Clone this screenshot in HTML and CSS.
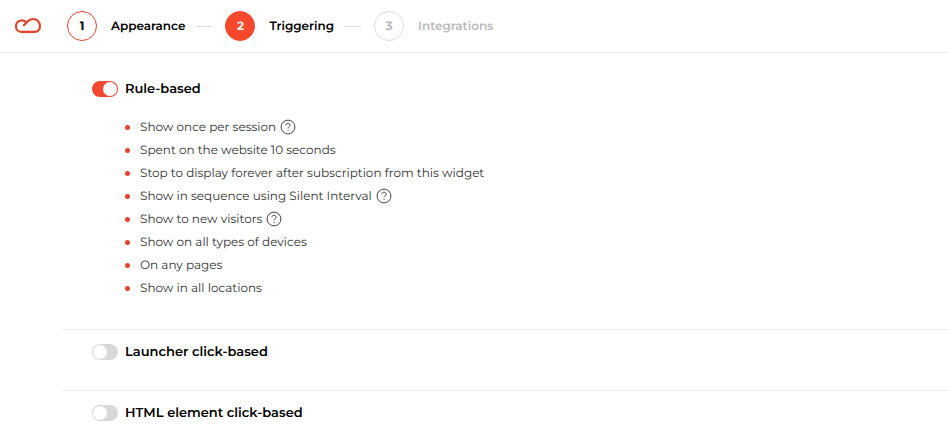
FILE: index.html
```html
<!DOCTYPE html>
<html lang="en">
<head>
<meta charset="utf-8">
<meta name="viewport" content="width=device-width, initial-scale=1">
<title>Triggering</title>
<link rel="stylesheet" href="styles.css">
</head>
<body>
<svg class="sprite" aria-hidden="true">
  <symbol id="help" viewBox="0 0 16 16">
    <circle cx="8" cy="8" r="6.9"/>
    <path d="M5.9 6.3C5.9 5 6.8 4.2 8 4.2s2.1.8 2.1 1.9c0 1.500-2 1.600-2 3.300"/>
    <path d="M8.1 11v1"/>
  </symbol>
</svg>
<header class="topbar">
  <a class="logo" href="#" aria-label="Home">
    <svg viewBox="0 0 28 18"><path d="M9.800 8.200 L12.300 5.700 C11 3.600 8.900 3.200 7.100 3.500 C4.500 3.900 2 6 2 9.500 C2 12.700 4.200 14.800 7.100 14.800 H20.600 C23.900 14.800 26 12.500 26 9.300 C26 4.700 22.700 2 19.300 2 C17.300 2 15.800 2.600 14.500 3.800 L9.800 8.200"/></svg>
  </a>
  <nav class="steps" aria-label="Steps">
    <a class="step done" href="#"><span class="number">1</span><span class="name">Appearance</span></a>
    <span class="dash"></span>
    <a class="step current" href="#" aria-current="step"><span class="number">2</span><span class="name">Triggering</span></a>
    <span class="dash"></span>
    <a class="step upcoming" href="#"><span class="number">3</span><span class="name">Integrations</span></a>
  </nav>
</header>
<main class="content">
  <section class="trigger">
    <label class="heading"><input class="switch" type="checkbox" role="switch" checked>Rule-based</label>
    <ul class="rules">
      <li>Show once per session <button class="help" type="button" aria-label="Help"><svg><use href="#help"/></svg></button></li>
      <li>Spent on the website 10 seconds</li>
      <li>Stop to display forever after subscription from this widget</li>
      <li>Show in sequence using Silent Interval <button class="help" type="button" aria-label="Help"><svg><use href="#help"/></svg></button></li>
      <li>Show to new visitors <button class="help" type="button" aria-label="Help"><svg><use href="#help"/></svg></button></li>
      <li>Show on all types of devices</li>
      <li>On any pages</li>
      <li>Show in all locations</li>
    </ul>
  </section>
  <section class="trigger">
    <label class="heading"><input class="switch" type="checkbox" role="switch">Launcher click-based</label>
  </section>
  <section class="trigger">
    <label class="heading"><input class="switch" type="checkbox" role="switch">HTML element click-based</label>
  </section>
</main>
</body>
</html>
```
FILE: styles.css
```css
* { box-sizing: border-box; }
body {
  margin: 0;
  background: #fff;
  color: #000;
  font-family: Montserrat, Inter, sans-serif;
  font-size: 12px;
  text-rendering: geometricPrecision;
}
.sprite { display: none; }
.topbar {
  display: flex;
  align-items: center;
  gap: 25px;
  height: 53px;
  padding-left: 14px;
  border-bottom: 1px solid #ececec;
}
.logo svg {
  display: block;
  width: 28px;
  height: 18px;
  fill: none;
  stroke: #e5432b;
  stroke-width: 2.2;
  stroke-linejoin: round;
  stroke-linecap: round;
}
.steps { display: flex; align-items: center; }
.step {
  display: flex;
  align-items: center;
  gap: 14px;
  color: inherit;
  font-size: 12px;
  font-weight: 600;
  text-decoration: none;
}
.number {
  display: grid;
  place-items: center;
  width: 30px;
  height: 30px;
  border: 1px solid #e5452e;
  border-radius: 50%;
  font-weight: 700;
}
.current .number { background: #f6482d; border-color: #f6482d; color: #fff; }
.upcoming { color: #bababa; }
.upcoming .number { border-color: #dedede; }
.dash { width: 16px; height: 1px; margin: 0 13px 0 11px; background: #dcdcdc; }
.content { padding: 14px 0 0 63px; }
.trigger { padding: 12px 0 28px 29px; }
.trigger + .trigger { border-top: 1px solid #ebebeb; }
.heading {
  display: flex;
  align-items: center;
  gap: 7px;
  width: fit-content;
  font-size: 13px;
  font-weight: 600;
  line-height: 20px;
}
.switch {
  appearance: none;
  display: flex;
  width: 26px;
  height: 16px;
  margin: 0;
  padding: 1px;
  border-radius: 8px;
  background: #d8d8d8;
}
.switch::before {
  content: "";
  width: 14px;
  height: 14px;
  border-radius: 50%;
  background: #fff;
}
.switch:checked { justify-content: flex-end; background: #f2482f; }
.rules {
  margin: 17px 0 0;
  padding: 0 0 1px 33px;
  list-style: none;
  color: #333;
}
.rules li { display: flex; align-items: center; height: 23px; }
.rules li::before {
  content: "";
  width: 5px;
  height: 5px;
  margin-right: 10px;
  border-radius: 50%;
  background: #e8432b;
}
.help {
  margin: 0 0 2px 4px;
  padding: 0;
  border: 0;
  background: none;
  color: #444;
}
.help svg {
  display: block;
  width: 16px;
  height: 16px;
  fill: none;
  stroke: currentColor;
  stroke-width: 1;
}
```
